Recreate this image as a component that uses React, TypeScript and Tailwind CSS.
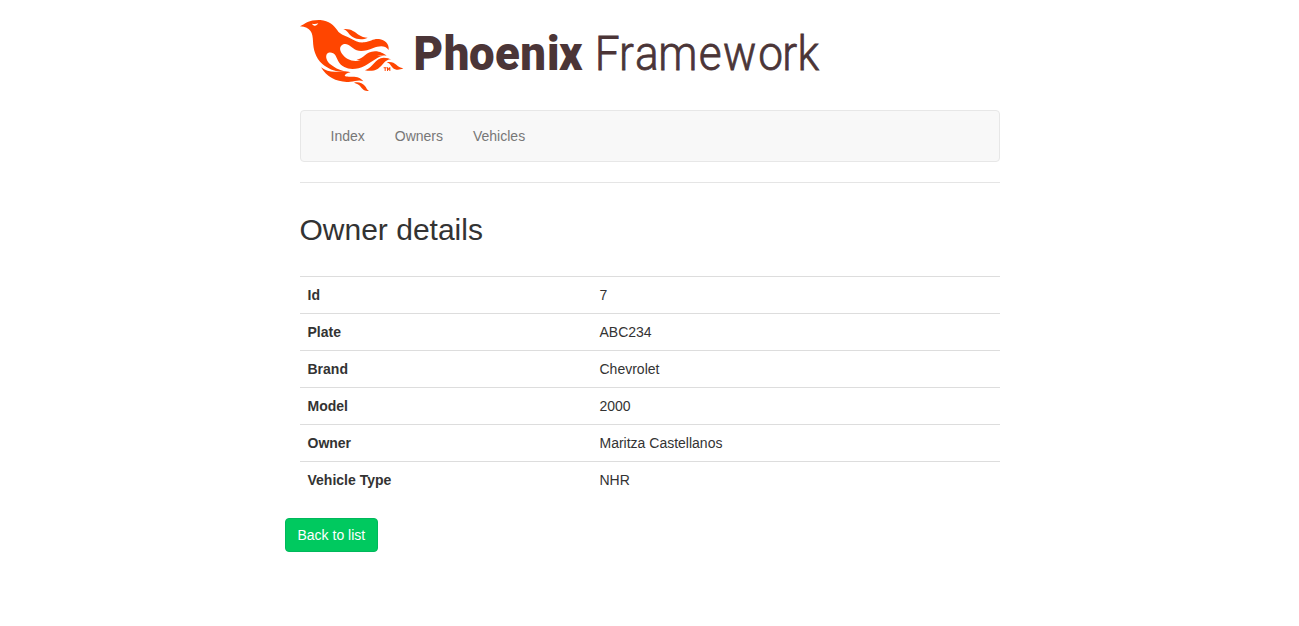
import React from "react";

const rows: [string, string][] = [
  ["Id", "7"],
  ["Plate", "ABC234"],
  ["Brand", "Chevrolet"],
  ["Model", "2000"],
  ["Owner", "Maritza Castellanos"],
  ["Vehicle Type", "NHR"],
];

function Logo() {
  return (
    <svg width="530" height="82" viewBox="0 0 530 82" className="-ml-[5px] block overflow-visible" role="img">
      <g transform="scale(0.33333)" fill="#ff4500">
        <path
          fillRule="evenodd"
          d="M15 37C32 28 42 17 76 18C102 20 117 34 127 49C134 61 149 65 164 72C181 81 192 87 208 85C226 82 236 73 252 75C270 77 283 90 281 108C270 93 252 96 235 102C216 110 199 113 185 109C170 102 160 86 145 91C133 96 133 108 141 119C150 132 165 140 182 141C202 141 211 130 234 127C246 125 257 124 273 124C247 126 235 143 210 155C188 166 165 168 148 159C130 149 128 136 122 125C116 115 103 112 96 119C90 128 96 142 105 150C117 160 132 168 148 172C122 175 100 165 83 151C60 131 55 105 54 82C53 57 48 40 15 37ZM51 29C56 37 64 38 70 28C63 30 58 30 51 29Z"
        />
        <path d="M145 45C168 43 178 53 192 63C199 68 208 71 218 71C203 78 187 77 173 69C160 62 160 50 145 45Z" />
        <path d="M185 137C207 135 211 113 240 112C256 112 265 119 275 125C251 119 241 130 224 137C210 142 198 141 185 137Z" />
        <path d="M210 169C235 161 239 132 266 131C276 131 284 134 289 136C267 137 264 155 249 164C237 171 224 172 210 169Z" />
        <path d="M275 145C302 140 303 160 325 163C310 170 301 168 293 161C286 154 286 148 275 145Z" />
        <path d="M78 160C92 171 108 174 125 173C139 172 150 170 167 175C157 176 151 180 149 185C154 189 167 187 178 188C192 189 200 195 205 202C192 196 181 202 166 203C131 207 96 192 78 160Z" />
        <path d="M177 206C190 202 203 208 210 216C215 223 216 227 222 231C208 231 203 226 197 218C192 211 185 209 177 206Z" />
        <path d="M266 160h9v3h-3v8h-3v-8h-3zM276 160h3l2 4 2-4h3v11h-3v-5l-2 3-2-3v5h-3z" />
      </g>
      <g fill="#4b3537" className="font-[Roboto,sans-serif]" fontSize="48">
        <text transform="scale(0.95 1)" y="56" x="124.8 156.5 183.3 210.4 237.2 265.2 277.9" fontWeight="900">
          Phoenix
        </text>
        <text
          transform="scale(0.92 1)"
          y="56"
          x="325.7 352.1 369.7 394.9 438.8 465.3 503.5 529.7 546.3"
          fontWeight="300"
          stroke="#4b3537"
          strokeWidth="0.8"
        >
          Framework
        </text>
      </g>
    </svg>
  );
}

export default function App() {
  return (
    <div className="min-h-[626px] bg-white font-['Liberation_Sans',Arial,sans-serif] text-[14px] leading-5 text-[#333]">
      <div className="mx-auto w-[700px] pt-[14px]">
        <header>
          <Logo />
          <nav className="mt-[14px] flex h-[52px] items-center gap-[30px] rounded border border-[#e7e7e7] bg-[#f8f8f8] px-[30px] text-[#777]">
            <a>Index</a>
            <a>Owners</a>
            <a>Vehicles</a>
          </nav>
        </header>
        <hr className="mt-5 border-[#e5e5e5]" />
        <h2 className="mt-[30px] text-[30px] leading-[33px]">Owner details</h2>
        <table className="mt-[30px] w-full table-fixed border-collapse text-left">
          <tbody>
            {rows.map(([k, v]) => (
              <tr key={k} className="border-t border-[#ddd]">
                <th className="w-[292px] p-2 font-bold">{k}</th>
                <td className="p-2">{v}</td>
              </tr>
            ))}
          </tbody>
        </table>
        <button className="-ml-[15px] mt-5 block h-[34px] rounded border border-[#00b85c] bg-[#00c95f] px-3 text-white">
          Back to list
        </button>
      </div>
    </div>
  );
}
